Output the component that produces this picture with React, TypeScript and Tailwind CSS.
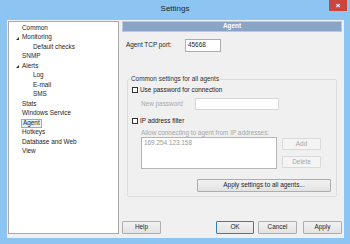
const tree = [
  { label: "Common", level: 1 },
  { label: "Monitoring", level: 1, open: true },
  { label: "Default checks", level: 2 },
  { label: "SNMP", level: 1 },
  { label: "Alerts", level: 1, open: true },
  { label: "Log", level: 2 },
  { label: "E-mail", level: 2 },
  { label: "SMS", level: 2 },
  { label: "Stats", level: 1 },
  { label: "Windows Service", level: 1 },
  { label: "Agent", level: 1, selected: true },
  { label: "Hotkeys", level: 1 },
  { label: "Database and Web", level: 1 },
  { label: "View", level: 1 },
];

const Button = ({ label, className = "", disabled = false, primary = false }: { label: string; className?: string; disabled?: boolean; primary?: boolean }) => (
  <div
    className={
      "flex items-center justify-center border rounded-[1px] " +
      (disabled
        ? "border-[#d9d9d9] bg-[#f4f4f4] text-[#a6a6a6] "
        : primary
        ? "border-[#3d7bad] bg-gradient-to-b from-[#f2f2f2] to-[#e3e3e3] text-[#1e1e1e] "
        : "border-[#adadad] bg-gradient-to-b from-[#f2f2f2] to-[#e3e3e3] text-[#1e1e1e] ") +
      className
    }
  >
    {label}
  </div>
);

const Checkbox = ({ label }: { label: string }) => (
  <div className="flex items-center h-[8px] gap-[2px]">
    <div className="w-[6px] h-[6px] border border-[#333] bg-white" />
    <span className="text-[#1a1a1a] font-medium">{label}</span>
  </div>
);

export default function App() {
  return (
    <div className="w-[350px] h-[244px] bg-[#8cc5f2] flex flex-col overflow-hidden font-['Liberation_Sans',Arial,sans-serif] text-[6.4px] leading-none text-[#1e1e1e]">
      {/* title bar */}
      <div className="relative h-[20px] flex justify-center">
        <span className="mt-[5px] text-[8px] text-[#222]">Settings</span>
        <div className="absolute top-0 right-[3px] w-[18px] h-[11px] bg-[#c9463d] flex items-center justify-center text-white text-[8px] font-bold">
          ×
        </div>
      </div>

      {/* client area */}
      <div className="flex-1 ml-[7px] mr-[6px] mb-[6px] bg-[#f0f0f0] flex pt-[1px] pl-[1px] pr-[2px] pb-[4px]">
        {/* tree */}
        <div className="w-[111px] h-full bg-white border border-[#a9a9a9] pt-[1px]">
          {tree.map((item) => (
            <div key={item.label} className="relative h-[9.54px] flex items-center">
              {item.open && (
                <svg className="absolute left-[7px] top-[4px]" width="3" height="3" viewBox="0 0 3 3">
                  <polygon points="3,0 3,3 0,3" fill="#333" />
                </svg>
              )}
              <span
                className={
                  item.selected
                    ? "ml-[12px] px-[1px] h-[9px] flex items-center border border-[#7fb2e5] bg-[#e5f3ff]"
                    : item.level === 2
                    ? "ml-[24px]"
                    : "ml-[13px]"
                }
              >
                {item.label}
              </span>
            </div>
          ))}
        </div>

        {/* right column */}
        <div className="ml-[3px] flex-1 flex flex-col">
          <div className="h-[11px] bg-[#8aa4c8] border border-[#b9c9de] flex items-center justify-center text-white font-bold">
            Agent
          </div>

          <div className="mt-[7px] flex items-center h-[13px] pl-[4px]">
            <span className="w-[59px]">Agent TCP port:</span>
            <div className="w-[36px] h-[13px] bg-white border border-[#abadb3] flex items-center pl-[2px]">45668</div>
          </div>

          {/* group box */}
          <div className="relative mt-[27px] ml-[5px] w-[210px] h-[118px] border border-[#dcdcdc] rounded-[2px]">
            <span className="absolute -top-[4px] left-[2px] px-[1px] bg-[#f0f0f0] text-[#333]">
              Common settings for all agents
            </span>
            <div className="flex flex-col pl-[4px]">
              <div className="mt-[6px]">
                <Checkbox label="Use password for connection" />
              </div>
              <div className="mt-[4px] h-[12px] flex items-center pl-[9px]">
                <span className="w-[54px] text-[#a8a8a8]">New password</span>
                <div className="w-[84px] h-[12px] bg-white border border-[#d6d6d6]" />
              </div>
              <div className="mt-[7px]">
                <Checkbox label="IP address filter" />
              </div>
              <div className="mt-[4px] h-[8px] flex items-center pl-[9px] text-[#a8a8a8]">
                Allow connecting to agent from IP addresses:
              </div>
              <div className="flex pl-[9px]">
                <div className="w-[136px] h-[32px] bg-white border border-[#b5b5b5] pl-[2px] pt-[2px] text-[#9a9a9a]">
                  169.254.123.158
                </div>
                <div className="ml-[5px] flex flex-col pt-[1px]">
                  <Button label="Add" disabled className="w-[39px] h-[12px]" />
                  <Button label="Delete" disabled className="mt-[6px] w-[39px] h-[12px]" />
                </div>
              </div>
              <Button label="Apply settings to all agents..." className="mt-[10px] ml-[65px] w-[134px] h-[13px]" />
            </div>
          </div>

          {/* bottom buttons */}
          <div className="mt-auto flex h-[13px]">
            <Button label="Help" className="w-[39px] h-[13px]" />
            <Button label="OK" primary className="ml-[55px] w-[38px] h-[13px]" />
            <Button label="Cancel" className="ml-[4px] w-[39px] h-[13px]" />
            <Button label="Apply" className="ml-[6px] w-[39px] h-[13px]" />
          </div>
        </div>
      </div>
    </div>
  );
}
